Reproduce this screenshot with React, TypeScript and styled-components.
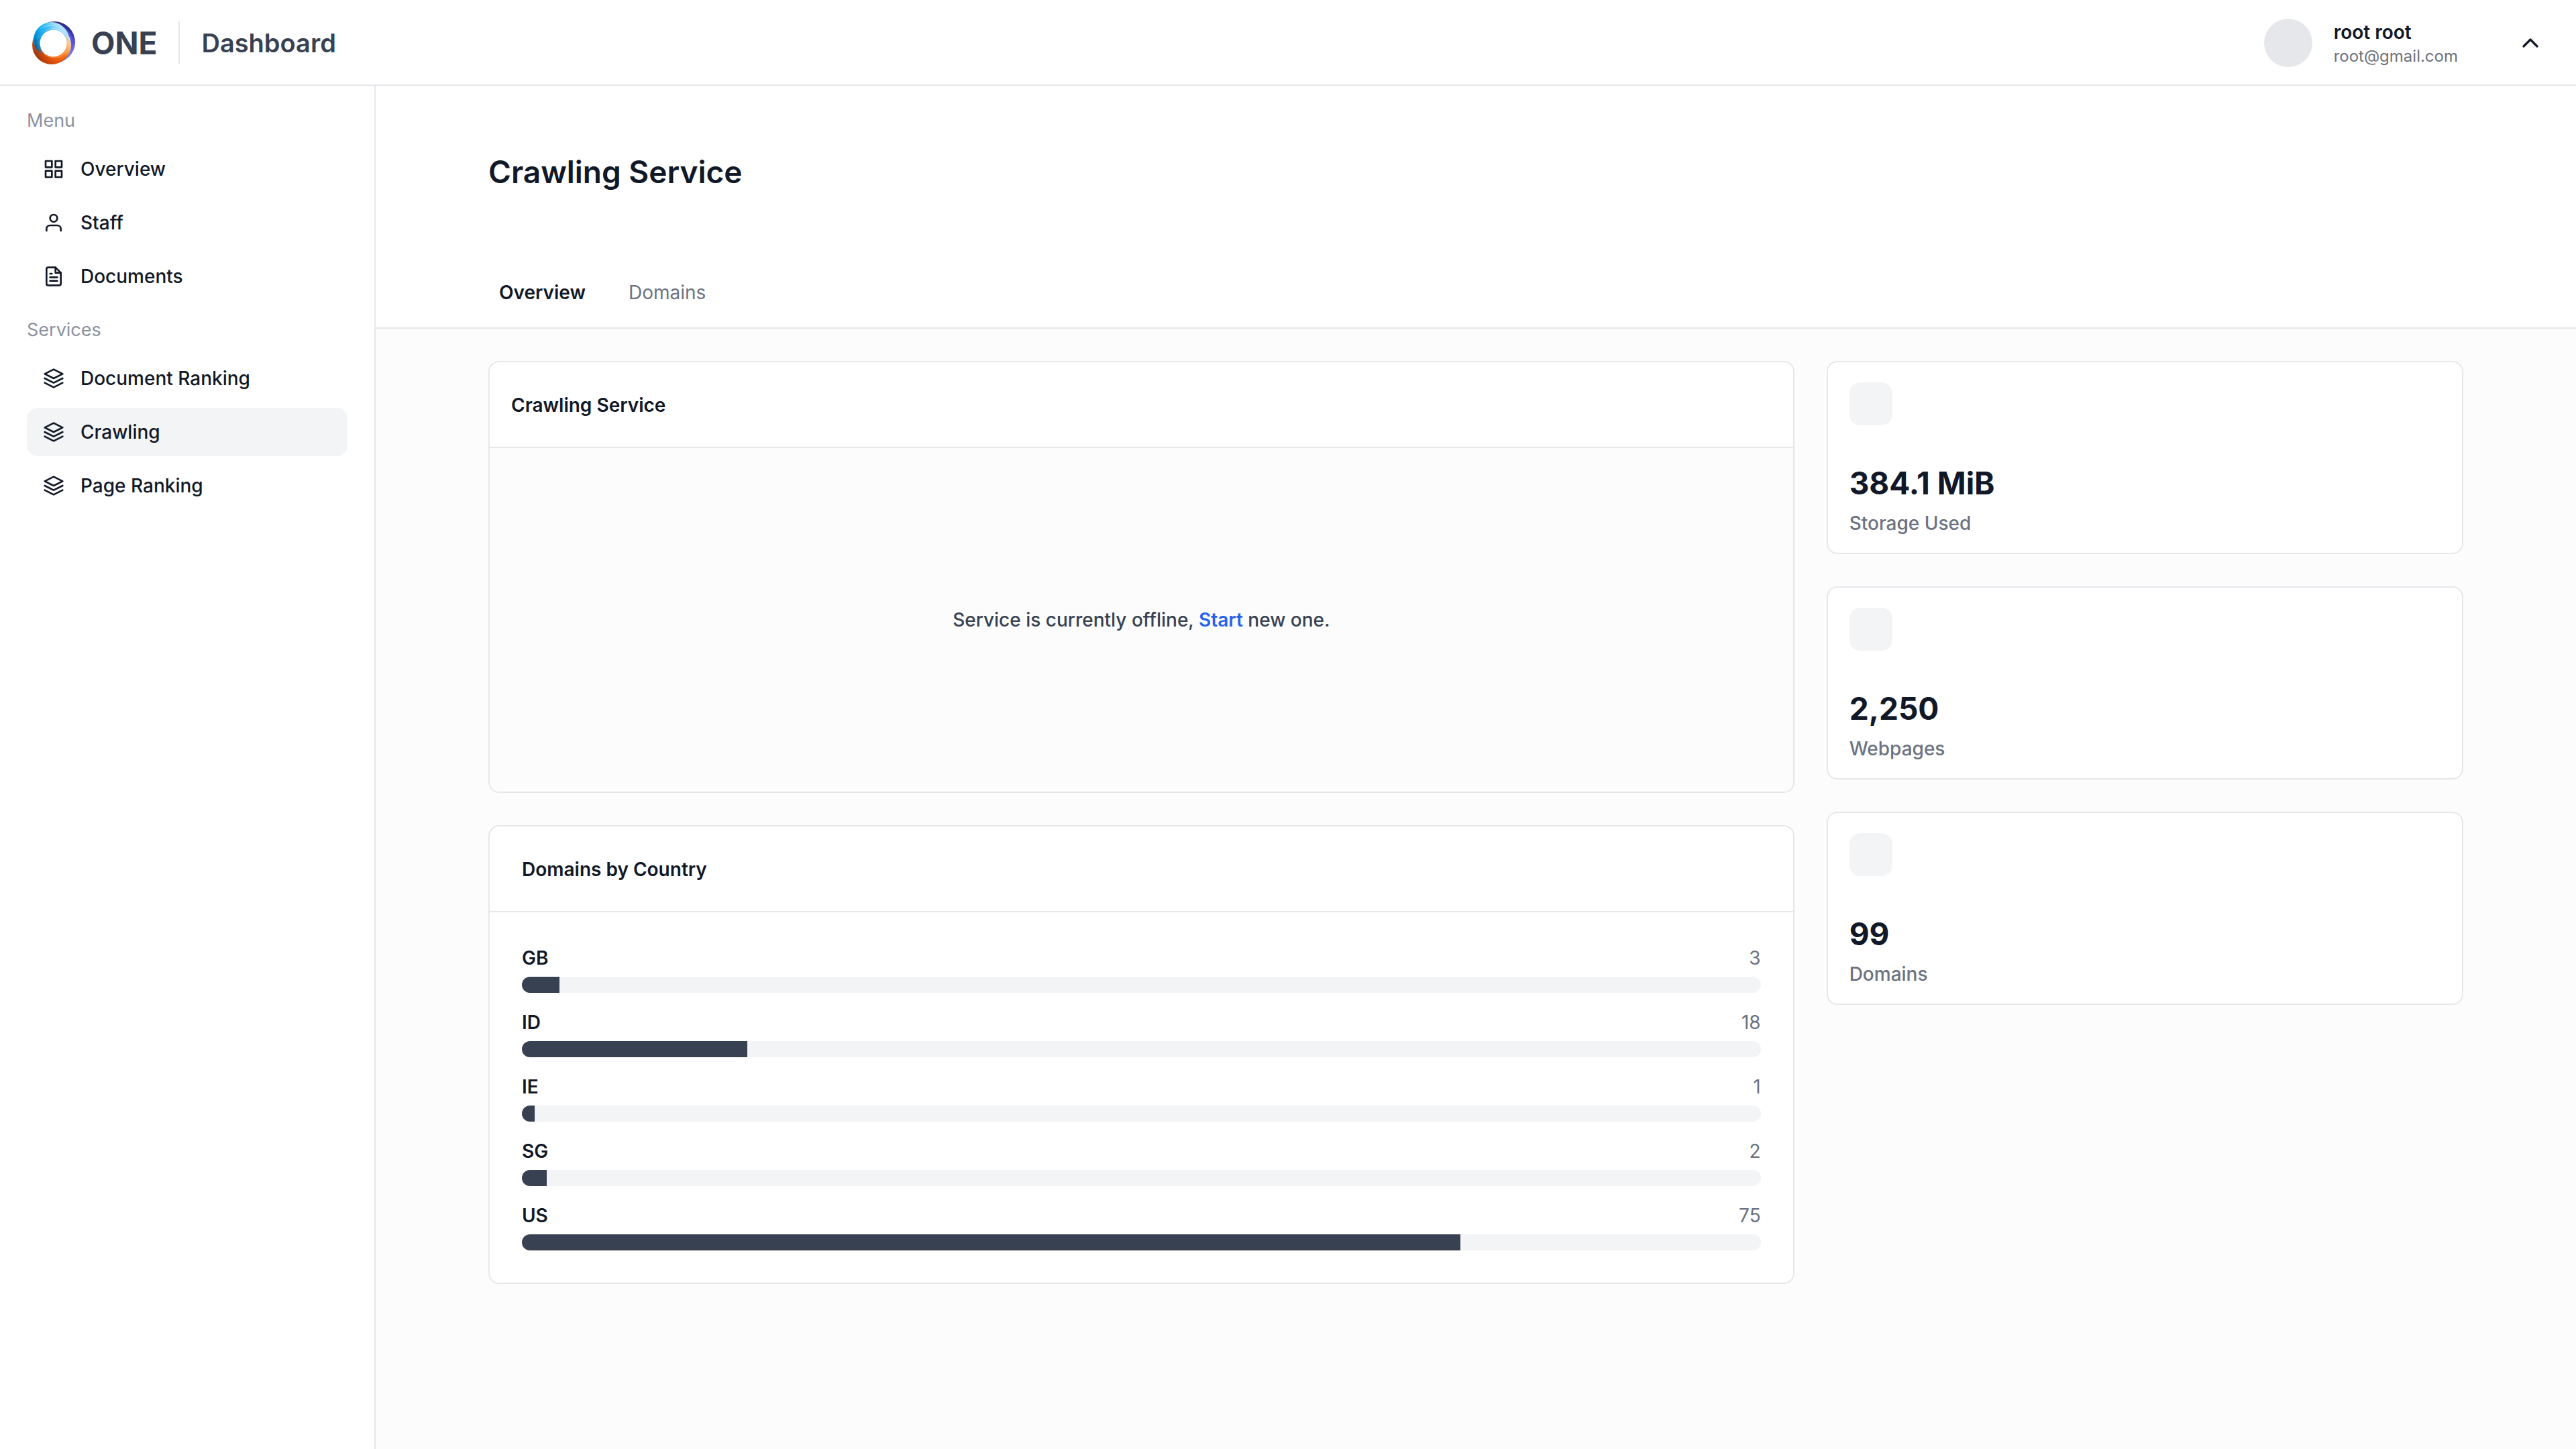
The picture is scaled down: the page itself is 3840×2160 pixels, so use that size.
import React from "react";
import styled, { createGlobalStyle } from "styled-components";
import { FiChevronUp, FiFileText, FiGrid, FiLayers, FiUser } from "react-icons/fi";

const GlobalStyle = createGlobalStyle`
  *, *::before, *::after { box-sizing: border-box; }
  body {
    margin: 0;
    background: #ffffff;
    color: #111827;
    font-family: Inter, "Liberation Sans", sans-serif;
    font-size: 28px;
    line-height: 40px;
  }
  h1, h2, p, ul { margin: 0; padding: 0; }
  ul { list-style: none; }
  a { color: inherit; text-decoration: none; }
  button { font: inherit; color: inherit; background: none; border: 0; padding: 0; cursor: pointer; }
`;

const Shell = styled.div`
  min-height: 100vh;
  display: flex;
  flex-direction: column;
`;

const TopBar = styled.header`
  display: flex;
  align-items: center;
  justify-content: space-between;
  height: 128px;
  padding: 2px 48px 0;
  border-bottom: 2px solid #e5e7eb;
`;

const Brand = styled.div`
  display: flex;
  align-items: center;
`;

const BrandName = styled.span`
  margin-left: 24px;
  padding-right: 32px;
  font-size: 46px;
  line-height: 64px;
  font-weight: 700;
  color: #374151;
`;

const Section = styled.span`
  padding-left: 32px;
  border-left: 2px solid #e5e7eb;
  font-size: 38px;
  line-height: 64px;
  font-weight: 600;
  color: #374151;
`;

const Account = styled.div`
  display: flex;
  align-items: center;
  gap: 32px;
`;

const Avatar = styled.div`
  width: 72px;
  height: 72px;
  border-radius: 50%;
  background: #e5e7eb;
`;

const UserName = styled.p`
  font-weight: 600;
`;

const UserEmail = styled.p`
  font-size: 24px;
  line-height: 32px;
  color: #6b7280;
`;

const AccountToggle = styled.button`
  display: flex;
  margin-left: 56px;
`;

const Body = styled.div`
  flex: 1;
  display: flex;
`;

const Sidebar = styled.nav`
  flex: none;
  width: 560px;
  padding: 32px 40px;
  display: flex;
  flex-direction: column;
  gap: 24px;
  border-right: 2px solid #e5e7eb;
`;

const NavGroup = styled.div`
  display: flex;
  flex-direction: column;
  gap: 16px;
`;

const NavLabel = styled.h2`
  font-size: 27px;
  font-weight: 400;
  color: #8a919e;
`;

const NavList = styled.ul`
  display: flex;
  flex-direction: column;
  gap: 8px;
`;

const NavLink = styled.a<{ $active?: boolean }>`
  display: flex;
  align-items: center;
  gap: 24px;
  height: 72px;
  padding: 0 24px;
  border-radius: 16px;
  font-weight: 500;
  background: ${(p) => (p.$active ? "#f3f4f6" : "transparent")};
`;

const Main = styled.main`
  flex: 1;
  min-width: 0;
  background: #fcfcfc;
`;

const PageHead = styled.div`
  padding: 96px 168px 32px;
  background: #ffffff;
  border-bottom: 2px solid #e5e7eb;
`;

const PageTitle = styled.h1`
  font-size: 46px;
  line-height: 64px;
  font-weight: 600;
`;

const Tabs = styled.div`
  display: flex;
  gap: 32px;
  margin-top: 128px;
`;

const Tab = styled.button<{ $active?: boolean }>`
  padding: 0 16px;
  font-weight: ${(p) => (p.$active ? 600 : 400)};
  color: ${(p) => (p.$active ? "#111827" : "#6b7280")};
`;

const Content = styled.div`
  display: grid;
  grid-template-columns: repeat(3, minmax(0, 1fr));
  align-items: start;
  gap: 48px;
  padding: 48px 168px;
`;

const WideColumn = styled.div`
  grid-column: span 2;
  display: flex;
  flex-direction: column;
  gap: 48px;
`;

const Column = styled.div`
  display: flex;
  flex-direction: column;
  gap: 48px;
`;

const Card = styled.section`
  background: #ffffff;
  border: 2px solid #e5e7eb;
  border-radius: 16px;
  overflow: hidden;
`;

const CardHead = styled.div<{ $inset: number }>`
  display: flex;
  align-items: center;
  height: 128px;
  padding: 2px ${(p) => p.$inset}px 0;
  border-bottom: 2px solid #e5e7eb;
`;

const CardTitle = styled.h2`
  font-size: 28px;
  font-weight: 600;
`;

const EmptyState = styled.div`
  display: flex;
  align-items: center;
  justify-content: center;
  min-height: 512px;
  background: #fcfcfc;
  color: #374151;
  font-weight: 500;
`;

const StartButton = styled.button`
  font-weight: 600;
  color: #2563eb;
`;

const CountryList = styled.ul`
  display: flex;
  flex-direction: column;
  gap: 24px;
  padding: 48px;
`;

const CountryRow = styled.li`
  display: flex;
  flex-direction: column;
  gap: 8px;
`;

const CountryMeta = styled.div`
  display: flex;
  justify-content: space-between;
`;

const CountryCode = styled.span`
  font-weight: 600;
`;

const CountryCount = styled.span`
  color: #6b7280;
`;

const Track = styled.div`
  height: 24px;
  border-radius: 12px;
  background: #f3f4f6;
  overflow: hidden;
`;

const Fill = styled.div`
  height: 100%;
  background: #374151;
`;

const StatCard = styled(Card)`
  display: flex;
  flex-direction: column;
  justify-content: space-between;
  min-height: 288px;
  padding: 30px 32px 24px;
`;

const StatIcon = styled.div`
  width: 64px;
  height: 64px;
  border-radius: 16px;
  background: #f3f4f6;
`;

const StatText = styled.div`
  display: flex;
  flex-direction: column;
  gap: 8px;
`;

const StatValue = styled.p`
  font-size: 46px;
  line-height: 64px;
  font-weight: 700;
`;

const StatLabel = styled.p`
  font-weight: 500;
  color: #6b7280;
`;

function Logo() {
  return (
    <svg width="64" height="64" viewBox="0 0 64 64" aria-hidden="true">
      <defs>
        <mask id="ring">
          <rect width="64" height="64" fill="#fff" />
          <circle cx="31.5" cy="32.5" r="20" fill="#000" />
        </mask>
        <linearGradient id="indigo" gradientUnits="userSpaceOnUse" x1="36" y1="0" x2="50" y2="60">
          <stop offset="0" stopColor="#312e81" />
          <stop offset="0.3" stopColor="#3730a3" />
          <stop offset="0.6" stopColor="#4f46e5" />
          <stop offset="1" stopColor="#a5b4fc" />
        </linearGradient>
        <linearGradient id="orange" gradientUnits="userSpaceOnUse" x1="52" y1="18" x2="8" y2="54">
          <stop offset="0" stopColor="#ffedd5" />
          <stop offset="0.2" stopColor="#fdba74" />
          <stop offset="0.42" stopColor="#f97316" />
          <stop offset="0.7" stopColor="#ea580c" />
          <stop offset="0.9" stopColor="#c2410c" />
          <stop offset="1" stopColor="#9a3412" />
        </linearGradient>
        <linearGradient id="blue" gradientUnits="userSpaceOnUse" x1="12" y1="52" x2="48" y2="14">
          <stop offset="0" stopColor="#075985" />
          <stop offset="0.25" stopColor="#0284c7" />
          <stop offset="0.5" stopColor="#0ea5e9" />
          <stop offset="0.75" stopColor="#38bdf8" />
          <stop offset="1" stopColor="#bae6fd" />
        </linearGradient>
        <linearGradient id="fade" gradientUnits="userSpaceOnUse" x1="46" y1="20" x2="52" y2="32">
          <stop offset="0" stopColor="#fff" />
          <stop offset="1" stopColor="#000" />
        </linearGradient>
        <mask id="blueFade">
          <rect width="64" height="64" fill="url(#fade)" />
        </mask>
      </defs>
      <g mask="url(#ring)">
        <circle cx="33" cy="31" r="31" fill="url(#indigo)" />
        <circle cx="36" cy="34" r="26" fill="#6366f1" opacity="0.5" />
        <circle cx="29" cy="35" r="29" fill="url(#orange)" />
        <path d="M2 44A29 29 0 0 0 57 42A30 30 0 0 1 2 44Z" fill="#c2410c" opacity="0.55" />
        <circle cx="33" cy="32" r="23" fill="#fdba74" opacity="0.35" />
        <g mask="url(#blueFade)">
          <circle cx="28.5" cy="27.5" r="26.5" fill="url(#blue)" />
          <circle cx="33" cy="32" r="27" fill="#7dd3fc" opacity="0.15" />
          <path d="M10 12A26 26 0 0 1 50 18A30 30 0 0 0 10 12Z" fill="#bae6fd" opacity="0.5" />
          <path d="M20 14A24 24 0 0 1 54 28A22 22 0 0 0 20 14Z" fill="#e0f2fe" opacity="0.7" />
          <path d="M4 24A28 28 0 0 0 22 54A24 24 0 0 1 8 28Z" fill="#075985" opacity="0.35" />
        </g>
      </g>
    </svg>
  );
}

const menu = [
  { label: "Overview", Icon: FiGrid },
  { label: "Staff", Icon: FiUser },
  { label: "Documents", Icon: FiFileText },
];

const services = [
  { label: "Document Ranking", Icon: FiLayers },
  { label: "Crawling", Icon: FiLayers, active: true },
  { label: "Page Ranking", Icon: FiLayers },
];

const countries = [
  { code: "GB", count: 3 },
  { code: "ID", count: 18 },
  { code: "IE", count: 1 },
  { code: "SG", count: 2 },
  { code: "US", count: 75 },
];

const stats = [
  { value: "384.1 MiB", label: "Storage Used" },
  { value: "2,250", label: "Webpages" },
  { value: "99", label: "Domains" },
];

type NavItem = { label: string; Icon: React.ElementType; active?: boolean };

function Group({ title, items }: { title: string; items: NavItem[] }) {
  return (
    <NavGroup>
      <NavLabel>{title}</NavLabel>
      <NavList>
        {items.map(({ label, Icon, active }) => (
          <li key={label}>
            <NavLink href="#" $active={active} aria-current={active ? "page" : undefined}>
              <Icon size={32} />
              {label}
            </NavLink>
          </li>
        ))}
      </NavList>
    </NavGroup>
  );
}

export default function App() {
  const total = countries.reduce((sum, c) => sum + c.count, 0);
  return (
    <Shell>
      <GlobalStyle />
      <TopBar>
        <Brand>
          <Logo />
          <BrandName>ONE</BrandName>
          <Section>Dashboard</Section>
        </Brand>
        <Account>
          <Avatar />
          <div>
            <UserName>root root</UserName>
            <UserEmail>root@gmail.com</UserEmail>
          </div>
          <AccountToggle aria-label="Account menu">
            <FiChevronUp size={40} />
          </AccountToggle>
        </Account>
      </TopBar>
      <Body>
        <Sidebar>
          <Group title="Menu" items={menu} />
          <Group title="Services" items={services} />
        </Sidebar>
        <Main>
          <PageHead>
            <PageTitle>Crawling Service</PageTitle>
            <Tabs role="tablist">
              <Tab role="tab" aria-selected="true" $active>Overview</Tab>
              <Tab role="tab" aria-selected="false">Domains</Tab>
            </Tabs>
          </PageHead>
          <Content>
            <WideColumn>
              <Card>
                <CardHead $inset={32}>
                  <CardTitle>Crawling Service</CardTitle>
                </CardHead>
                <EmptyState>
                  <p>
                    Service is currently offline, <StartButton>Start</StartButton> new one.
                  </p>
                </EmptyState>
              </Card>
              <Card>
                <CardHead $inset={48}>
                  <CardTitle>Domains by Country</CardTitle>
                </CardHead>
                <CountryList>
                  {countries.map(({ code, count }) => (
                    <CountryRow key={code}>
                      <CountryMeta>
                        <CountryCode>{code}</CountryCode>
                        <CountryCount>{count}</CountryCount>
                      </CountryMeta>
                      <Track>
                        <Fill style={{ width: `${(count / total) * 100}%` }} />
                      </Track>
                    </CountryRow>
                  ))}
                </CountryList>
              </Card>
            </WideColumn>
            <Column>
              {stats.map(({ value, label }) => (
                <StatCard key={label}>
                  <StatIcon />
                  <StatText>
                    <StatValue>{value}</StatValue>
                    <StatLabel>{label}</StatLabel>
                  </StatText>
                </StatCard>
              ))}
            </Column>
          </Content>
        </Main>
      </Body>
    </Shell>
  );
}
